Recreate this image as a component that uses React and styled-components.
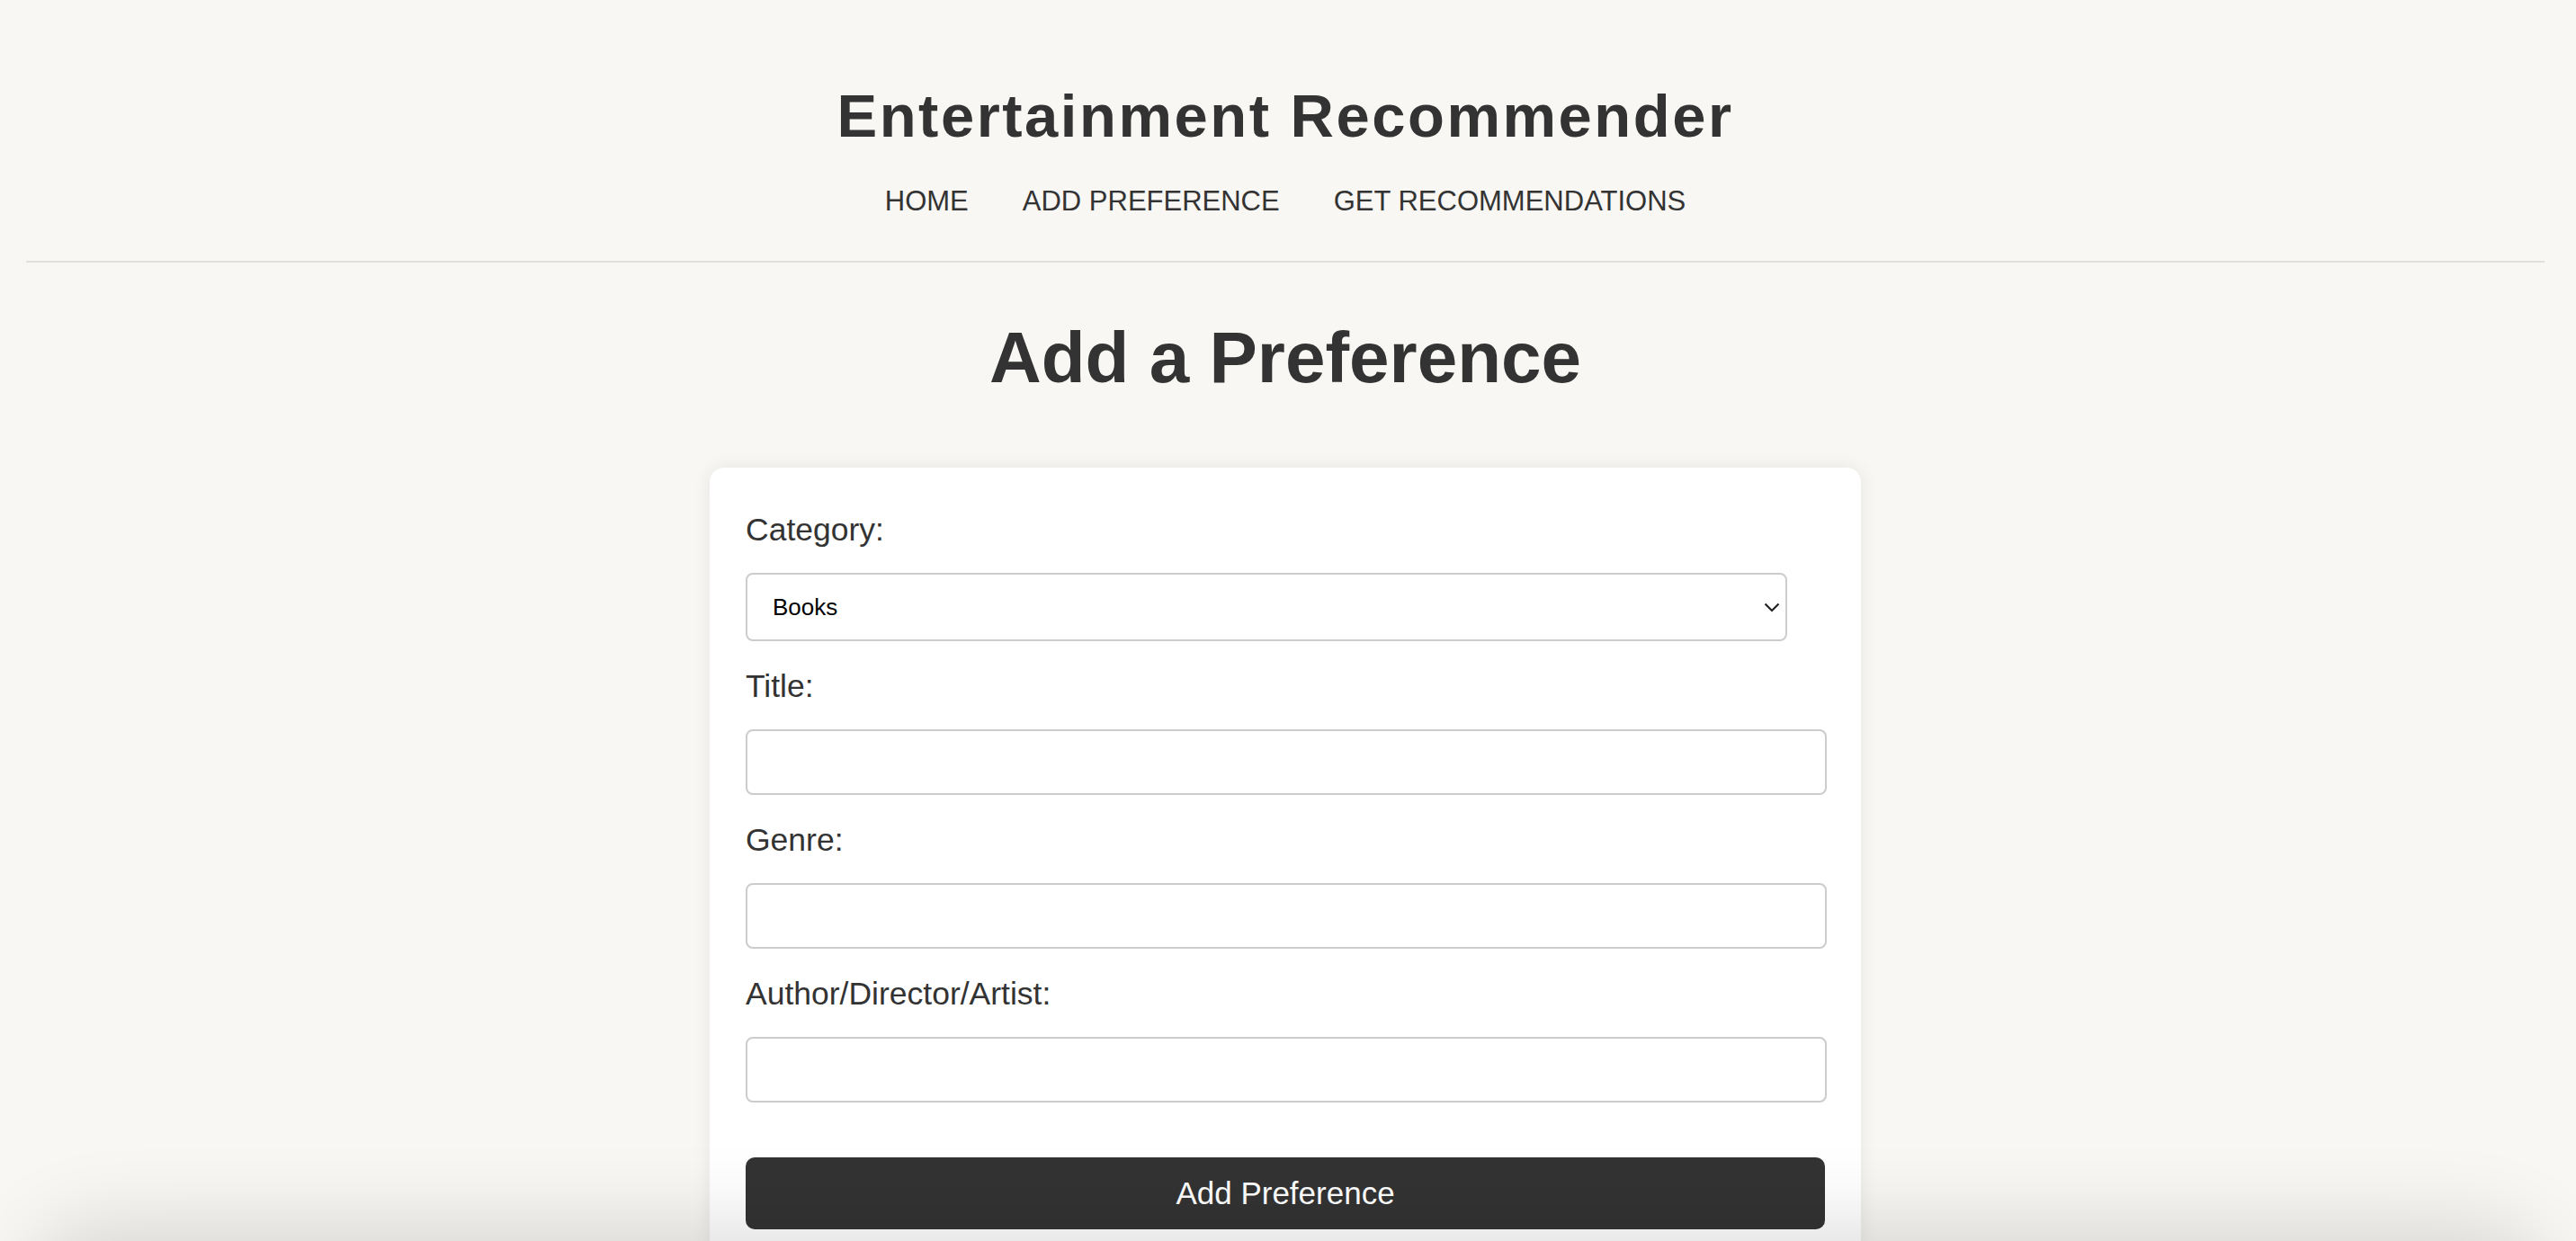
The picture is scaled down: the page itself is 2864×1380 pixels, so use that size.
import React from 'react'
import styled, { createGlobalStyle } from 'styled-components'

const GlobalStyle = createGlobalStyle`
  html, body {
    margin: 0;
    padding: 0;
    background-color: #f8f7f3;
  }

  body {
    font-family: 'Liberation Sans', Arial, Helvetica, sans-serif;
    color: #333;
  }

  * {
    box-sizing: border-box;
  }
`

const Page = styled.div`
  min-height: 100vh;
  padding: 0 35px 0 29px;
  background-color: #f8f7f3;
`

const Header = styled.header`
  padding: 90px 0 48px;
  border-bottom: 2px solid #e0dfdc;
  text-align: center;
`

const Title = styled.h1`
  margin: 0;
  font-size: 67px;
  line-height: 77px;
  font-weight: bold;
  letter-spacing: 2.5px;
  color: #333;
`

const Nav = styled.nav`
  margin-top: 38px;
  display: flex;
  justify-content: center;
  gap: 60px;
`

const NavLink = styled.a`
  font-size: 31px;
  line-height: 37px;
  color: #333;
  text-decoration: none;
  text-transform: uppercase;
  cursor: pointer;
`

const Main = styled.main`
  padding: 0;
`

const Heading = styled.h2`
  margin: 59px 0 0;
  font-size: 80px;
  line-height: 93px;
  font-weight: bold;
  text-align: center;
  color: #333;
`

const Card = styled.form`
  width: 1280px;
  margin: 76px auto 0;
  padding: 49px 40px 40px;
  background-color: #fff;
  border-radius: 16px;
  box-shadow: 0 0 20px rgba(0, 0, 0, 0.08);
`

const Field = styled.div`
  margin-bottom: 30px;
`

const Label = styled.label`
  display: block;
  margin-bottom: 28px;
  font-size: 35.5px;
  line-height: 40px;
  color: #333;
`

const SelectWrap = styled.div`
  position: relative;
  width: calc(100% - 42px);
`

const Select = styled.select`
  display: block;
  width: 100%;
  height: 76px;
  padding: 0 60px 0 28px;
  font-family: 'Liberation Sans', Arial, sans-serif;
  font-size: 26px;
  color: #000;
  background-color: #fff;
  border: 2px solid #ccc;
  border-radius: 8px;
  appearance: none;
  outline: none;
`

const Chevron = styled.svg`
  position: absolute;
  right: 8px;
  top: 33px;
  width: 18px;
  height: 11px;
  pointer-events: none;
`

const Input = styled.input`
  display: block;
  width: calc(100% + 2px);
  height: 73px;
  padding: 0 20px;
  font-family: 'Liberation Sans', Arial, sans-serif;
  font-size: 28px;
  background-color: #fff;
  border: 2px solid #ccc;
  border-radius: 8px;
  outline: none;
`

const SubmitButton = styled.button`
  display: block;
  width: 100%;
  height: 80px;
  margin-top: 61px;
  font-family: 'Liberation Sans', Arial, sans-serif;
  font-size: 35px;
  color: #fff;
  background-color: #333;
  border: none;
  border-radius: 10px;
  cursor: pointer;
`

// shadow of whatever sits just below the window edge
const BottomShade = styled.div`
  position: fixed;
  left: 50px;
  right: 50px;
  top: 100vh;
  height: 120px;
  border-radius: 60px;
  box-shadow: 0 0 90px 20px rgba(0, 0, 0, 0.13);
  pointer-events: none;
`

const fields = [
  { id: 'title', label: 'Title:' },
  { id: 'genre', label: 'Genre:' },
  { id: 'creator', label: 'Author/Director/Artist:' }
]

export default function App () {
  return (
    <Page>
      <GlobalStyle />
      <Header>
        <Title>Entertainment Recommender</Title>
        <Nav>
          <NavLink>Home</NavLink>
          <NavLink>Add Preference</NavLink>
          <NavLink>Get Recommendations</NavLink>
        </Nav>
      </Header>
      <Main>
        <Heading>Add a Preference</Heading>
        <Card onSubmit={e => e.preventDefault()}>
          <Field>
            <Label htmlFor='category'>Category:</Label>
            <SelectWrap>
              <Select id='category' defaultValue='books'>
                <option value='books'>Books</option>
                <option value='movies'>Movies</option>
                <option value='music'>Music</option>
              </Select>
              <Chevron viewBox='0 0 18 11' fill='none'>
                <path d='M1.5 1.5 L9 9 L16.5 1.5' stroke='#222' strokeWidth='2.2' />
              </Chevron>
            </SelectWrap>
          </Field>
          {fields.map(f => (
            <Field key={f.id}>
              <Label htmlFor={f.id}>{f.label}</Label>
              <Input id={f.id} type='text' />
            </Field>
          ))}
          <SubmitButton type='submit'>Add Preference</SubmitButton>
        </Card>
      </Main>
      <BottomShade aria-hidden='true' />
    </Page>
  )
}
